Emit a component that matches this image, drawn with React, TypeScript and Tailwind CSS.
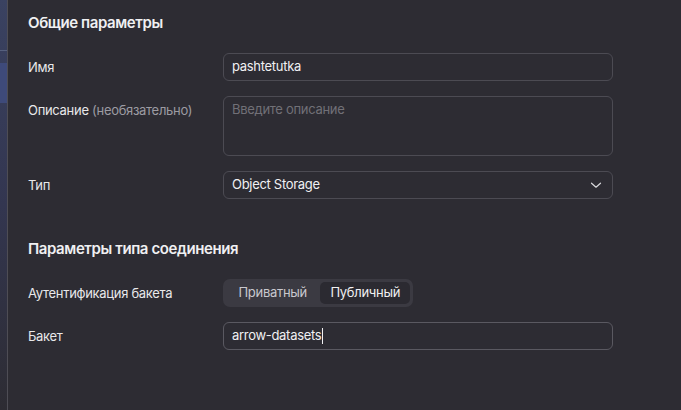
import React from "react";

function Row({ label, children, alignTop }: { label: React.ReactNode; children: React.ReactNode; alignTop?: boolean }) {
  return (
    <div className={`flex ${alignTop ? "items-start" : "items-center"}`}>
      <div className={`w-[195px] shrink-0 text-[13px] leading-[16px] tracking-[-0.3px] text-[#e8e8ea] ${alignTop ? "pt-[6px]" : ""}`}>{label}</div>
      <div className="w-[390px]">{children}</div>
    </div>
  );
}

export default function App() {
  return (
    <div
      className="flex h-[410px] w-[681px] overflow-hidden bg-[#2d2c33]"
      style={{ fontFamily: "Inter, 'Noto Sans', sans-serif" }}
    >
      {/* left sidebar strip */}
      <div className="flex w-[8px] shrink-0 flex-col border-r border-[#4e4d55] bg-gradient-to-b from-[#3a4261] via-[#333650] to-[#2d2c33]">
        <div className="h-[50px]" />
        <div className="h-px bg-[#56607e]" />
        <div className="h-[12px]" />
        <div className="h-[40px] bg-[#3e4a7a]" />
      </div>

      <div className="flex flex-1 flex-col pl-[20px] pt-[13px]">
        <div className="text-[15px] font-semibold leading-[20px] tracking-[-0.4px] text-[#f0f0f2]">Общие параметры</div>

        <div className="mt-[20px] flex flex-col gap-[15px]">
          <Row label="Имя">
            <div className="flex h-[28px] items-center rounded-[6px] border border-[#4c4b53] px-[8px] text-[13px] tracking-[-0.3px] text-[#f0f0f2]">
              pashtetutka
            </div>
          </Row>
          <Row
            alignTop
            label={
              <span>
                Описание <span className="text-[#9c9ba2]">(необязательно)</span>
              </span>
            }
          >
            <div className="h-[60px] rounded-[6px] border border-[#4c4b53] px-[8px] pt-[4px] text-[13px] leading-[16px] tracking-[-0.3px] text-[#717077]">
              Введите описание
            </div>
          </Row>
          <Row label="Тип">
            <div className="flex h-[28px] items-center justify-between rounded-[6px] border border-[#4c4b53] pl-[8px] pr-[10px] text-[13px] tracking-[-0.3px] text-[#f0f0f2]">
              <span>Object Storage</span>
              <svg width="12" height="12" viewBox="0 0 12 12" fill="none">
                <path d="M1.5 4.2L6 8.2L10.5 4.2" stroke="#d8d8dc" strokeWidth="1.2" strokeLinecap="round" strokeLinejoin="round" />
              </svg>
            </div>
          </Row>
        </div>

        <div className="mt-[40px] text-[15px] font-semibold leading-[20px] tracking-[-0.4px] text-[#f0f0f2]">Параметры типа соединения</div>

        <div className="mt-[20px] flex flex-col gap-[15px]">
          <Row label="Аутентификация бакета">
            <div className="flex h-[28px] w-[190px] items-center gap-[1px] rounded-[7px] bg-[#3b3a42] p-[3px]">
              <div className="flex h-[22px] w-[94px] items-center justify-center text-[13px] tracking-[-0.3px] text-[#c9c8ce]">Приватный</div>
              <div className="flex h-[22px] w-[90px] items-center justify-center rounded-[5px] bg-[#2b2a31] text-[13px] tracking-[-0.3px] text-[#f0f0f2]">
                Публичный
              </div>
            </div>
          </Row>
          <Row label="Бакет">
            <div className="flex h-[28px] items-center rounded-[6px] border border-[#5a5961] px-[8px] text-[13px] tracking-[-0.3px] text-[#f0f0f2]">
              arrow-datasets<span className="ml-px inline-block h-[16px] w-px bg-[#f0f0f2]" />
            </div>
          </Row>
        </div>
      </div>
    </div>
  );
}
